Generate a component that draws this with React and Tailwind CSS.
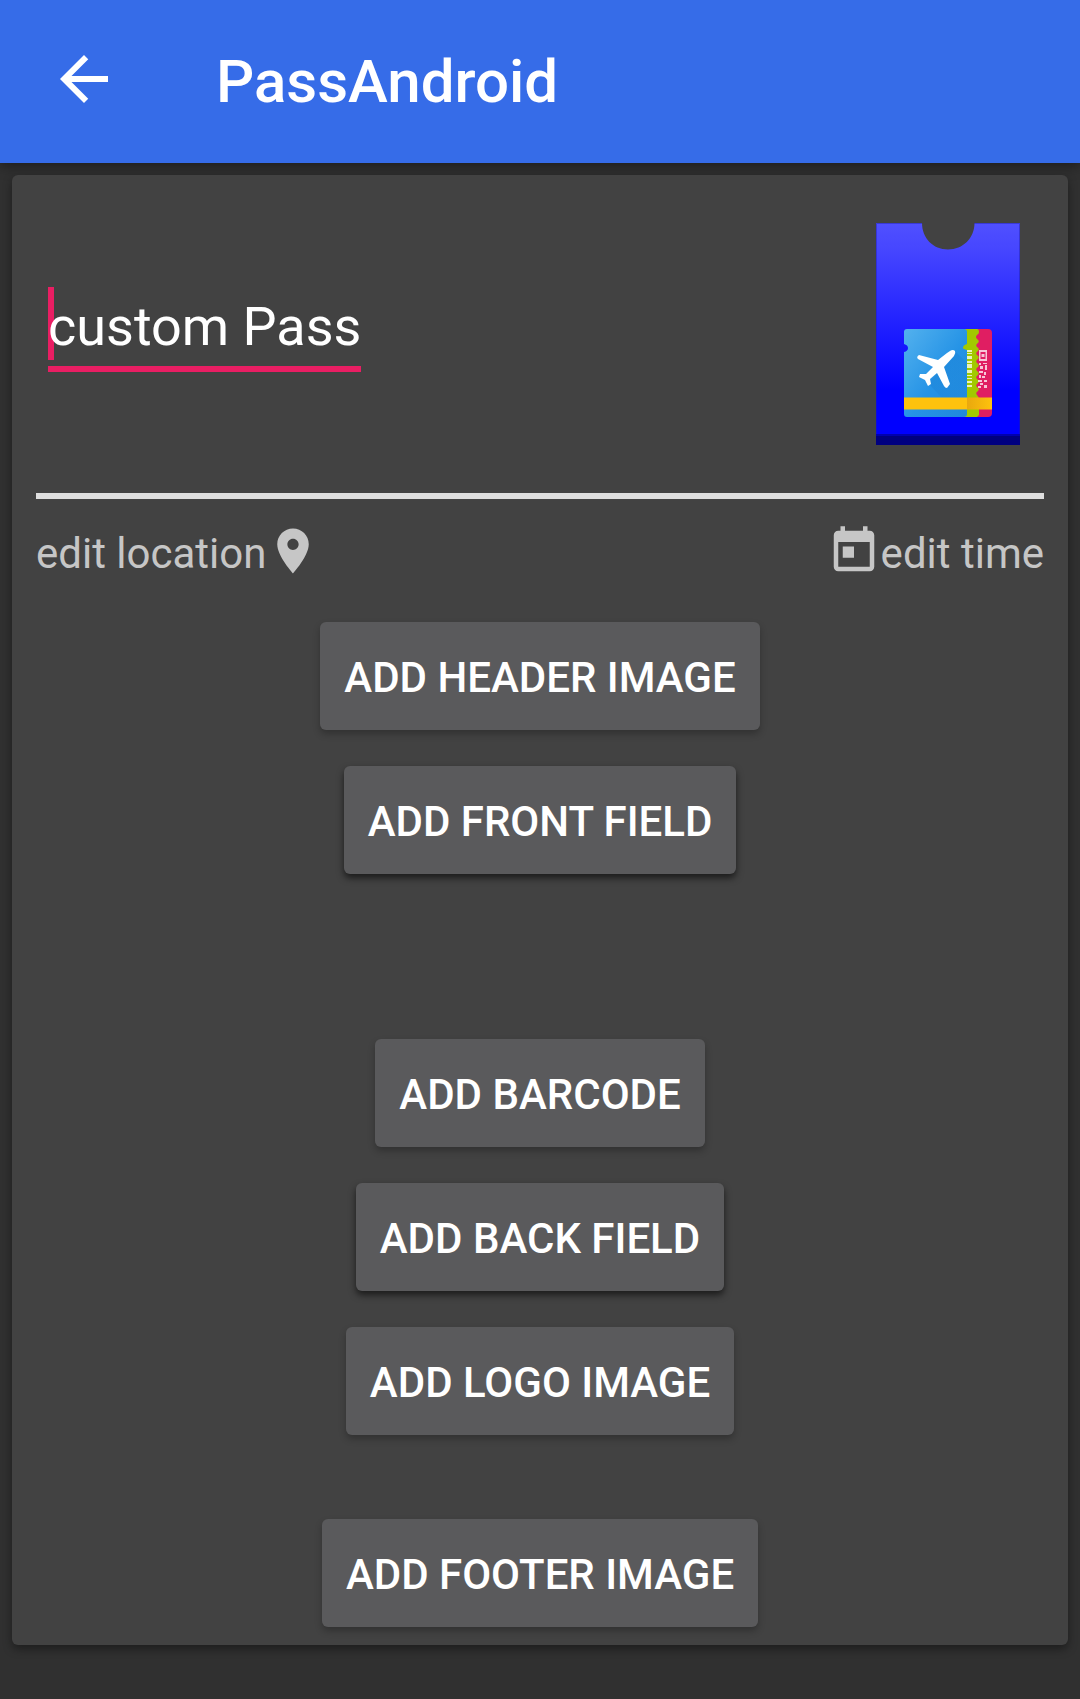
import React from "react";

function PassArtwork() {
  return (
    <svg viewBox="0 0 144 222" className="h-[222px] w-36 shrink-0" role="img" aria-label="Pass icon">
      <defs>
        <linearGradient id="pass" x1="0" y1="0" x2="0" y2="1">
          <stop offset="0" stopColor="#5050ff" />
          <stop offset="0.12" stopColor="#4646ff" />
          <stop offset="0.75" stopColor="#0000ff" />
          <stop offset="1" stopColor="#0000ff" />
        </linearGradient>
        <linearGradient id="ticket" x1="0" y1="0" x2="1" y2="1">
          <stop offset="0" stopColor="#53b1ee" />
          <stop offset="0.55" stopColor="#2593e6" />
          <stop offset="1" stopColor="#2088dc" />
        </linearGradient>
        <linearGradient id="stripe" x1="0" y1="0" x2="1" y2="0">
          <stop offset="0" stopColor="#e9a80e" />
          <stop offset="1" stopColor="#fec20d" />
        </linearGradient>
        <linearGradient id="planeShadow" x1="0" y1="0" x2="1" y2="1">
          <stop offset="0" stopColor="#1b7fd3" stopOpacity=".6" />
          <stop offset="1" stopColor="#1b7fd3" stopOpacity=".1" />
        </linearGradient>
      </defs>
      <path d="M0 0H46C46 15 57 26.500 72 26.500S98.500 15 98.500 0H144V222H0Z" fill="url(#pass)" />
      <path d="M.5 212V.5H46M98 .5H143.500V212" fill="none" stroke="#1c1ca8" strokeOpacity=".45" />
      <rect y="212" width="144" height="10" fill="#000080" />
      <rect y="211" width="144" height="2" fill="#0000b0" />
      <rect x="82" y="106" width="34" height="88" rx="4" fill="#e01e62" />
      <path
        d="M82 106H101Q103 106 103 109Q103 111 101 112Q99 114 101 116Q104 118 102 120Q99 122 101 124Q104 126 102 128Q99 130 101 132Q104 134 102 136Q99 138 101 140Q104 142 102 144Q99 146 101 148Q104 150 102 152Q99 154 101 156Q104 158 102 160Q99 162 101 164Q104 166 102 168Q99 170 101 172L103 175V192L101 194H82Z"
        fill="#a2c900"
      />
      <path
        d="M31 106H88Q91 106 91 109V121Q87 122 87 125Q87 126 91 127V191Q91 194 88 194H31Q28 194 28 191V129Q32 128 32 125Q32 122 28 121V109Q28 106 31 106Z"
        fill="url(#ticket)"
      />
      <path d="M79 128L91 140V174H65L52 160L67 144Z" fill="url(#planeShadow)" />
      <rect x="28" y="174.500" width="63" height="12" fill="#fec20d" />
      <rect x="91" y="174.500" width="25" height="12" fill="url(#stripe)" />
      <g fill="#fff" fillOpacity=".75">
        <path d="M91 127h5v2h-5zM91 130h5v1h-5zM91 133h5v3h-5zM91 138h5v2h-5zM91 141h5v4h-5zM91 147h5v3h-5zM91 152h5v1h-5zM91 155h5v1h-5zM91 158h5v2h-5zM91 162h5v2h-5z" />
        <path fillRule="evenodd" d="M103 127h8v11h-8zM104.500 129v7h5v-7zM105.500 131h3v3h-3z" />
        <path d="M103 140h2v2h-2zM107 140h4v1h-4zM104 143h3v3h-3zM109 142h2v5h-2zM103 148h4v2h-4zM108 149h2v3h-2zM103 152h2v3h-2zM106 153h3v2h-3zM102 157h4v2h-4zM108 157h3v2h-3zM104 160h3v2h-3zM102 163h3v2h-3zM108 162h3v3h-3z" />
      </g>
      <path
        d="M74 128Q77 126 79 128Q80 130 78 133L68 144L74 161L71 165Q69 165 68 163L61 150L54 156L55 161L52 163L49 157L43 154L44 151L50 151L57 144L42 136Q40 134 43 132L62 137L71 130Z"
        fill="#fff"
      />
    </svg>
  );
}

function BackIcon() {
  return (
    <svg viewBox="0 0 24 24" className="size-[72px]" fill="currentColor" aria-hidden="true">
      <path d="M20 11H7.830l5.590-5.590L12 4l-8 8 8 8 1.410-1.410L7.830 13H20v-2z" />
    </svg>
  );
}

function PlaceIcon() {
  return (
    <svg viewBox="0 0 24 24" className="size-[54px]" fill="currentColor" aria-hidden="true">
      <path d="M12 2C8.130 2 5 5.130 5 9c0 5.250 7 13 7 13s7-7.750 7-13c0-3.870-3.130-7-7-7zm0 9.500c-1.380 0-2.500-1.120-2.500-2.500s1.120-2.500 2.500-2.500 2.500 1.120 2.500 2.500-1.120 2.500-2.500 2.500z" />
    </svg>
  );
}

function TodayIcon() {
  return (
    <svg viewBox="0 0 24 24" className="size-[54px]" fill="currentColor" aria-hidden="true">
      <path d="M19 3h-1V1h-2v2H8V1H6v2H5c-1.110 0-1.990.9-1.990 2L3 19c0 1.100.89 2 2 2h14c1.100 0 2-.9 2-2V5c0-1.100-.9-2-2-2zm0 16H5V8h14v11zM7 10h5v5H7z" />
    </svg>
  );
}

function ActionButton({ children, raised = false }) {
  const shadow = raised
    ? "shadow-[0_4px_7px_rgba(0,0,0,0.6)]"
    : "shadow-[0_4px_7px_rgba(0,0,0,0.25)]";
  return (
    <button
      type="button"
      className={`h-[108px] rounded-md bg-[#5a5a5c] px-6 pt-0.5 text-[42px] font-medium whitespace-nowrap text-white ${shadow}`}
    >
      {children}
    </button>
  );
}

export default function App() {
  return (
    <div className="min-h-screen bg-[#303030] font-['Roboto',sans-serif] text-white">
      <header className="flex h-[163px] items-center bg-[#366ce8] px-12 shadow-[0_3px_12px_rgba(0,0,0,0.4)]">
        <button type="button" aria-label="Back" className="-mt-1.5 shrink-0">
          <BackIcon />
        </button>
        <h1 className="ml-24 text-[60px] font-medium">PassAndroid</h1>
      </header>

      <main className="mx-3 mt-3 rounded-md bg-[#424242] px-6 pt-12 pb-[18px] shadow-[0_4px_10px_rgba(0,0,0,0.4)]">
        <section className="flex items-start justify-between px-3 pr-6">
          <div className="relative mt-16 border-b-6 border-[#e91e63] pb-1.5">
            <span className="absolute top-0 left-0 h-[73px] w-1.5 bg-[#e91e63]" aria-hidden="true" />
            <input
              type="text"
              aria-label="Pass description"
              defaultValue="custom Pass"
              className="relative block field-sizing-content h-[73px] bg-transparent pt-1.5 text-[54px] leading-[67px] outline-none"
            />
          </div>
          <PassArtwork />
        </section>

        <hr className="mt-12 border-t-6 border-[#dedede]" />

        <div className="mt-[25px] flex justify-between text-[42px] leading-[60px] text-[#c6c6c6]">
          <button type="button" className="flex items-start">
            <span>edit location</span>
            <PlaceIcon />
          </button>
          <button type="button" className="flex items-start">
            <TodayIcon />
            <span>edit time</span>
          </button>
        </div>

        <div className="mt-[38px] flex flex-col items-center gap-9">
          <ActionButton>ADD HEADER IMAGE</ActionButton>
          <ActionButton raised>ADD FRONT FIELD</ActionButton>
          <div className="mt-[129px]">
            <ActionButton>ADD BARCODE</ActionButton>
          </div>
          <ActionButton raised>ADD BACK FIELD</ActionButton>
          <ActionButton>ADD LOGO IMAGE</ActionButton>
          <div className="mt-12">
            <ActionButton>ADD FOOTER IMAGE</ActionButton>
          </div>
        </div>
      </main>
    </div>
  );
}
